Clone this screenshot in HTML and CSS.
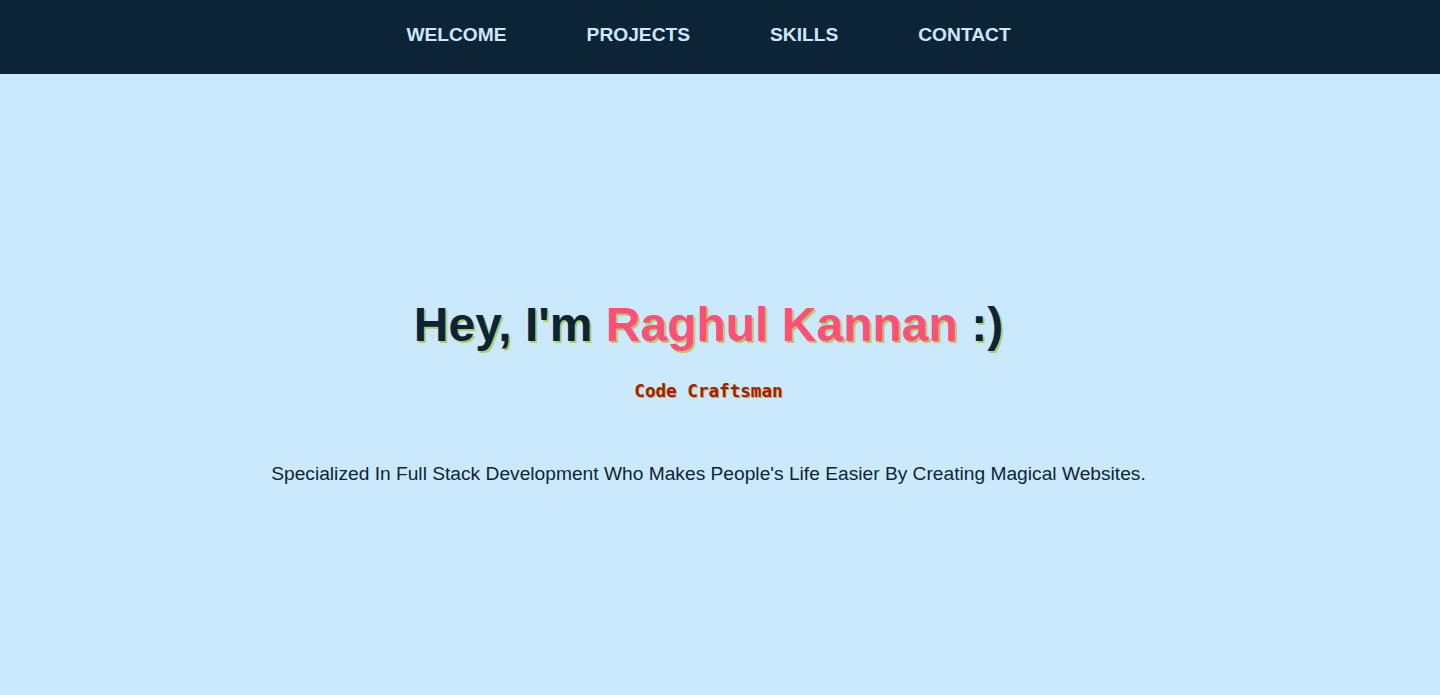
FILE: index.html
```html
<!DOCTYPE html>
<html lang="en">
<head>
<meta charset="utf-8">
<title>Raghul Kannan</title>
<link rel="stylesheet" href="styles.css">
</head>
<body>
<nav class="nav">
  <ul class="nav-list">
    <li><a class="nav-link" href="#welcome">WELCOME</a></li>
    <li><a class="nav-link" href="#projects">PROJECTS</a></li>
    <li><a class="nav-link" href="#skills">SKILLS</a></li>
    <li><a class="nav-link" href="#contact">CONTACT</a></li>
  </ul>
</nav>
<main class="hero" id="welcome">
  <h1 class="hero-title">Hey, I'm <span class="hero-name">Raghul Kannan</span> :)</h1>
  <p class="hero-role">Code Craftsman</p>
  <p class="hero-desc">Specialized In Full Stack Development Who Makes People's Life Easier By Creating Magical Websites.</p>
</main>
</body>
</html>
```

FILE: styles.css
```css
* { box-sizing: border-box; }
html, body { margin: 0; padding: 0; }
body {
  background: #cbe9fd;
  font-family: "Liberation Sans", Arial, sans-serif;
  color: #0d2436;
  height: 695px;
  overflow: hidden;
}
.nav {
  background: #0d2436;
  height: 74px;
  display: flex;
  align-items: center;
  justify-content: center;
  padding-right: 23px;
  padding-bottom: 4px;
}
.nav-list {
  list-style: none;
  margin: 0;
  padding: 0;
  display: flex;
  gap: 80px;
}
.nav-link {
  color: #cbe9fd;
  text-decoration: none;
  font-weight: bold;
  font-size: 19.2px;
}
.hero {
  display: flex;
  flex-direction: column;
  align-items: center;
  padding-right: 23px;
  padding-top: 223px;
}
.hero-title {
  margin: 0;
  font-size: 48px;
  font-weight: bold;
  color: #0d2436;
  text-shadow: 2px 2px 0 #b5c96a;
}
.hero-name { color: #fd5079; }
.hero-role {
  margin: 29px 0 0;
  font-family: "DejaVu Sans Mono", monospace;
  font-weight: bold;
  font-size: 17.6px;
  color: #a31f00;
  text-shadow: 1px 1px 0 #c8a33a;
}
.hero-desc {
  margin: 62px 0 0;
  font-size: 19.2px;
  color: #0d2436;
}
```
